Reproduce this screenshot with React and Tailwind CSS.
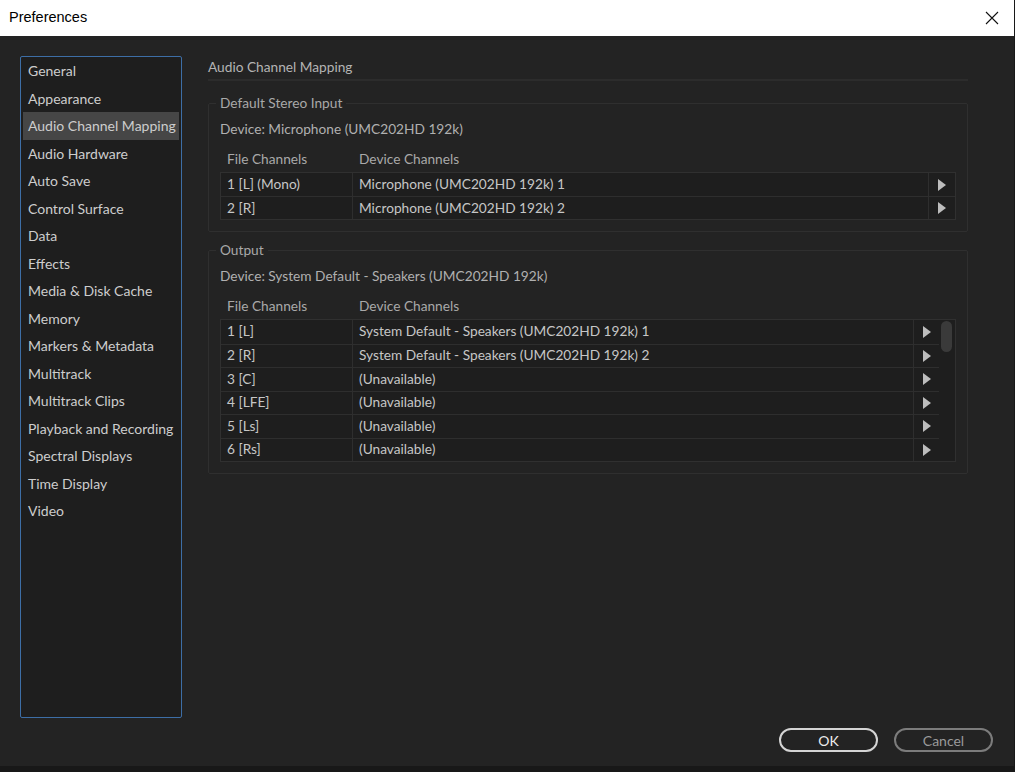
import React from 'react';

const navItems = [
  'General',
  'Appearance',
  'Audio Channel Mapping',
  'Audio Hardware',
  'Auto Save',
  'Control Surface',
  'Data',
  'Effects',
  'Media & Disk Cache',
  'Memory',
  'Markers & Metadata',
  'Multitrack',
  'Multitrack Clips',
  'Playback and Recording',
  'Spectral Displays',
  'Time Display',
  'Video',
];

const inputRows = [
  ['1 [L] (Mono)', 'Microphone (UMC202HD 192k) 1'],
  ['2 [R]', 'Microphone (UMC202HD 192k) 2'],
];

const outputRows = [
  ['1 [L]', 'System Default - Speakers (UMC202HD 192k) 1'],
  ['2 [R]', 'System Default - Speakers (UMC202HD 192k) 2'],
  ['3 [C]', '(Unavailable)'],
  ['4 [LFE]', '(Unavailable)'],
  ['5 [Ls]', '(Unavailable)'],
  ['6 [Rs]', '(Unavailable)'],
];

const Arrow = () => (
  <svg width="8" height="12" viewBox="0 0 8 12">
    <polygon points="0,0 8,6 0,12" fill="#bdbdbd" />
  </svg>
);

const ChannelTable = ({ rows, scroll }) => (
  <div className="flex border border-[#303030] bg-[#1e1e1e]">
    <div className="flex-1 flex flex-col">
      {rows.map(([file, device], i) => (
        <div
          key={file}
          className={`flex ${scroll ? 'h-[23.5px]' : 'h-[23px]'} ${i > 0 ? 'border-t border-[#2e2e2e]' : ''}`}
        >
          <div className="w-[132px] pl-[6px] flex items-center border-r border-[#2e2e2e]">{file}</div>
          <div className="flex-1 pl-[6px] flex items-center border-r border-[#2e2e2e]">{device}</div>
          <div className={`${scroll ? 'w-[25px]' : 'w-[26px]'} flex items-center justify-center`}>
            <Arrow />
          </div>
        </div>
      ))}
    </div>
    {scroll && (
      <div className="w-[16px] pt-[1px] pl-[2px]">
        <div className="w-[11px] h-[31px] rounded-full bg-[#3a3a3a]" />
      </div>
    )}
  </div>
);

const Group = ({ title, device, children, className }) => (
  <fieldset className={`border border-[#2f2f2f] rounded-[2px] px-[11px] pb-[11px] ${className}`}>
    <legend className="px-[4px] -ml-[4px] leading-[20px] text-[#a9a9a9]">{title}</legend>
    <div className="mt-[6px] leading-[20px] text-[#b0b0b0]">{device}</div>
    <div className="flex mt-[10px] leading-[20px] text-[#a9a9a9]">
      <div className="w-[132px] pl-[7px]">File Channels</div>
      <div className="pl-[7px]">Device Channels</div>
    </div>
    <div className="mt-[3px] text-[#c6c6c6]">{children}</div>
  </fieldset>
);

export default function App() {
  return (
    <div
      className="w-[1015px] h-[772px] bg-[#181818] flex flex-col overflow-hidden text-[14px]"
      style={{ fontFamily: 'Lato, "Noto Sans", sans-serif' }}
    >
      <div className="w-[1014px] h-[766px] flex flex-col">
        {/* title bar */}
        <div className="h-[36px] bg-white flex items-center justify-between pl-[9px] pr-[15px]">
          <span className="text-[14.5px] text-black" style={{ fontFamily: '"Liberation Sans", Arial, sans-serif' }}>
            Preferences
          </span>
          <svg width="14" height="14" viewBox="0 0 14 14">
            <path d="M1 1 L13 13 M13 1 L1 13" stroke="#111" strokeWidth="1.1" />
          </svg>
        </div>

        {/* body */}
        <div className="flex-1 bg-[#232323] flex flex-col pt-[20px] pl-[20px]">
          <div className="flex h-[662px]">
            <div className="w-[162px] h-full bg-[#1e1e1e] border-[1.5px] border-[#3d6ea6] rounded-[2px] px-[2px]">
              {navItems.map((item) => (
                <div
                  key={item}
                  className={`h-[27.5px] pl-[5px] flex items-center whitespace-nowrap text-[#cdcdcd] ${
                    item === 'Audio Channel Mapping' ? 'bg-[#464646]' : ''
                  }`}
                >
                  {item}
                </div>
              ))}
            </div>

            <div className="w-[760px] ml-[26px] flex flex-col text-[13.7px]">
              <div className="h-[23px] pt-[1px] leading-[20px] text-[#b4b4b4]">Audio Channel Mapping</div>
              <div className="h-[2px] bg-[#2c2c2c]" />
              <Group
                className="mt-[12px]"
                title="Default Stereo Input"
                device="Device: Microphone (UMC202HD 192k)"
              >
                <ChannelTable rows={inputRows} />
              </Group>
              <Group
                className="mt-[8px]"
                title="Output"
                device="Device: System Default - Speakers (UMC202HD 192k)"
              >
                <ChannelTable rows={outputRows} scroll />
              </Group>
            </div>
          </div>

          <div className="flex justify-end gap-[16px] mt-[10px] pr-[21px]">
            <button className="w-[99px] h-[24px] rounded-full border-2 border-[#d4d4d4] text-[#ececec] text-[14px] flex items-center justify-center">
              OK
            </button>
            <button className="w-[99px] h-[24px] rounded-full border-2 border-[#7c7c7c] text-[#9a9a9a] text-[14px] flex items-center justify-center">
              Cancel
            </button>
          </div>
        </div>
      </div>
    </div>
  );
}
